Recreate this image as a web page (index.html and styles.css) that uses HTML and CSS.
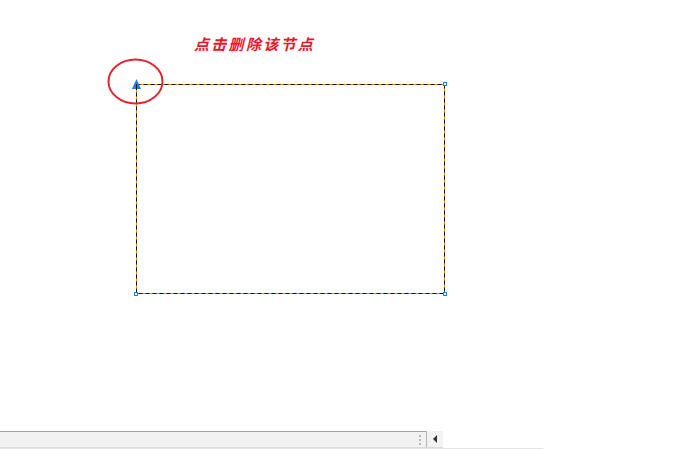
FILE: index.html
```html
<!DOCTYPE html>
<html>
<head>
<meta charset="utf-8">
<link rel="stylesheet" href="styles.css">
</head>
<body>
<div class="canvas">
  <div class="note">点击删除该节点</div>
  <svg class="shape" width="700" height="430" viewBox="0 0 700 430">
    <rect x="136.5" y="84.5" width="308" height="209" fill="none" stroke="#f08a1c" stroke-width="1"/>
    <rect x="136.5" y="84.5" width="308" height="209" fill="none" stroke="#111" stroke-width="1" stroke-dasharray="4 3"/>
    <rect x="443.5" y="82.5" width="3" height="3" fill="#fff" stroke="#1a7cf0"/>
    <rect x="134.5" y="292.5" width="3" height="3" fill="#fff" stroke="#1a7cf0"/>
    <rect x="443.5" y="292.5" width="3" height="3" fill="#fff" stroke="#1a7cf0"/>
    <polygon points="136.5,79 132,89 141,89" fill="#1a7cf0"/>
    <line x1="136.5" y1="84" x2="136.5" y2="90" stroke="#111"/>
    <ellipse cx="135.5" cy="81.5" rx="27" ry="22" fill="none" stroke="#e0262e" stroke-width="2"/>
  </svg>
</div>
<div class="hscroll">
  <div class="track"><span class="grip"></span></div>
  <div class="btn"><span class="arrow"></span></div>
</div>
<div class="baseline"></div>
</body>
</html>
```

FILE: styles.css
```css
html, body {
  margin: 0;
  padding: 0;
  background: #fff;
  width: 700px;
  height: 450px;
  overflow: hidden;
}
.canvas {
  position: relative;
  width: 700px;
  height: 431px;
}
.note {
  position: absolute;
  left: 194px;
  top: 34px;
  font-family: "Noto Sans CJK SC", sans-serif;
  font-size: 15px;
  line-height: 20px;
  font-weight: bold;
  font-style: italic;
  letter-spacing: 2.3px;
  color: #e8182c;
}
.shape {
  position: absolute;
  left: 0;
  top: 0;
}
.hscroll {
  display: flex;
  width: 443px;
  height: 17px;
}
.track {
  flex: 1;
  position: relative;
  background: #f2f2f2;
  border-top: 1px solid #a0a0a0;
  border-bottom: 1px solid #dcdcdc;
  box-sizing: border-box;
}
.grip {
  position: absolute;
  right: 5px;
  top: 3px;
  width: 2px;
  height: 10px;
  background: repeating-linear-gradient(to bottom, #b8b8b8 0 2px, transparent 2px 4px);
}
.btn {
  width: 17px;
  box-sizing: border-box;
  border-left: 1px solid #b4b4b4;
  border-bottom: 1px solid #dcdcdc;
  background: #f2f2f2;
  display: flex;
  align-items: center;
  justify-content: center;
}
.arrow {
  width: 0;
  height: 0;
  border-top: 4px solid transparent;
  border-bottom: 4px solid transparent;
  border-right: 4px solid #333;
}
.baseline {
  width: 543px;
  height: 1px;
  background: #e4e4e4;
}
```
